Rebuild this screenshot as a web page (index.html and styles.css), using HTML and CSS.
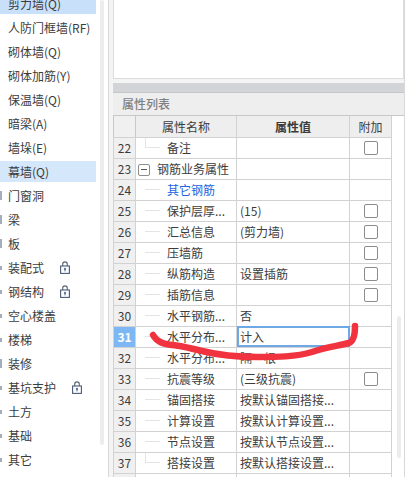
FILE: index.html
```html
<!DOCTYPE html>
<html lang="zh">
<head>
<meta charset="utf-8">
<title>属性列表</title>
<link rel="stylesheet" href="styles.css">
</head>
<body>
<svg width="0" height="0" class="defs"><defs>
<symbol id="lock" viewBox="0 0 10 13"><path d="M2.7 5V3.2a2.3 2.3 0 0 1 4.6 0V5" fill="none" stroke="#5a6478" stroke-width="1.1"/><rect x=".6" y="5" width="8.8" height="7.4" fill="#fff" stroke="#4a5a78" stroke-width="1.1"/><circle cx="5" cy="8" r="1.2" fill="#5a7a98"/><path d="M5 8.5v2" stroke="#5a7a98"/></symbol>
</defs></svg>
<aside class="side">
  <ul class="list">
    <li class="item sel-dark">剪力墙(Q)</li>
    <li class="item">人防门框墙(RF)</li>
    <li class="item">砌体墙(Q)</li>
    <li class="item">砌体加筋(Y)</li>
    <li class="item">保温墙(Q)</li>
    <li class="item">暗梁(A)</li>
    <li class="item">墙垛(E)</li>
    <li class="item sel">幕墙(Q)</li>
    <li class="item"><i class="tick tall"></i>门窗洞</li>
    <li class="item"><i class="tick tall"></i>梁</li>
    <li class="item"><i class="tick tall"></i>板</li>
    <li class="item"><i class="tick"></i>装配式<svg class="lock"><use href="#lock"/></svg></li>
    <li class="item"><i class="tick"></i>钢结构<svg class="lock"><use href="#lock"/></svg></li>
    <li class="item"><i class="tick"></i>空心楼盖</li>
    <li class="item"><i class="tick"></i>楼梯</li>
    <li class="item"><i class="tick tall"></i>装修</li>
    <li class="item"><i class="tick"></i>基坑支护<svg class="lock"><use href="#lock"/></svg></li>
    <li class="item"><i class="tick"></i>土方</li>
    <li class="item"><i class="tick"></i>基础</li>
    <li class="item"><i class="tick"></i>其它</li>
  </ul>
  <div class="side-scroll"></div>
</aside>
<main class="main">
  <div class="top-box"></div>
  <div class="bar"></div>
  <div class="title">属性列表</div>
  <div class="grid-wrap">
    <table class="grid">
      <colgroup><col class="c-num"><col class="c-name"><col class="c-val"><col class="c-add"></colgroup>
      <thead>
        <tr><th class="num"></th><th class="h-name">属性名称</th><th class="h-val">属性值</th><th class="h-add">附加</th></tr>
      </thead>
      <tbody>
        <tr><td class="num">22</td><td class="name tree end">备注</td><td></td><td class="add"><i class="check"></i></td></tr>
        <tr><td class="num">23</td><td class="group"><i class="minus"></i>钢筋业务属性</td><td></td><td></td></tr>
        <tr><td class="num">24</td><td class="name tree link">其它钢筋</td><td></td><td></td></tr>
        <tr><td class="num">25</td><td class="name tree">保护层厚...</td><td class="val">(15)</td><td class="add"><i class="check"></i></td></tr>
        <tr><td class="num">26</td><td class="name tree">汇总信息</td><td class="val">(剪力墙)</td><td class="add"><i class="check"></i></td></tr>
        <tr><td class="num">27</td><td class="name tree">压墙筋</td><td></td><td class="add"><i class="check"></i></td></tr>
        <tr><td class="num">28</td><td class="name tree">纵筋构造</td><td class="val">设置插筋</td><td class="add"><i class="check"></i></td></tr>
        <tr><td class="num">29</td><td class="name tree">插筋信息</td><td></td><td class="add"><i class="check"></i></td></tr>
        <tr><td class="num">30</td><td class="name tree">水平钢筋...</td><td class="val">否</td><td></td></tr>
        <tr><td class="num active">31</td><td class="name tree">水平分布...</td><td class="val editing">计入</td><td></td></tr>
        <tr><td class="num">32</td><td class="name tree">水平分布...</td><td class="val">隔一根</td><td></td></tr>
        <tr><td class="num">33</td><td class="name tree">抗震等级</td><td class="val">(三级抗震)</td><td class="add"><i class="check"></i></td></tr>
        <tr><td class="num">34</td><td class="name tree">锚固搭接</td><td class="val">按默认锚固搭接...</td><td></td></tr>
        <tr><td class="num">35</td><td class="name tree">计算设置</td><td class="val">按默认计算设置...</td><td></td></tr>
        <tr><td class="num">36</td><td class="name tree">节点设置</td><td class="val">按默认节点设置...</td><td></td></tr>
        <tr><td class="num">37</td><td class="name tree end">搭接设置</td><td class="val">按默认搭接设置...</td><td></td></tr>
        <tr><td class="num"></td><td class="group"><i class="minus"></i></td><td></td><td></td></tr>
      </tbody>
    </table>
    <div class="grid-scroll"></div>
  </div>
</main>
<svg class="scribble" viewBox="0 0 406 477" aria-hidden="true"><path d="M153 335C157 342 163 344 172 345C184 346 192 349 202 351C218 355 236 357 258 357C276 357 296 357 312 352C326 347 338 346 349 343C354 341 355 334 355 326" /></svg>
</body>
</html>
```
FILE: styles.css
```css
* { box-sizing: border-box; }
html, body { margin: 0; height: 100%; }
body {
  display: flex;
  width: 406px;
  height: 477px;
  overflow: hidden;
  background: #fff;
  color: #3c3c3c;
  font: 12px/21px "Noto Sans CJK SC", "Noto Sans", sans-serif;
}
.defs { position: absolute; }

.side { flex: 0 0 108px; display: flex; height: 477px; }
.list { list-style: none; width: 96px; margin: -7px 0 0; padding: 0; }
.item {
  display: flex;
  align-items: center;
  height: 21px;
  margin-bottom: 3px;
  padding-left: 8px;
  white-space: nowrap;
}
.sel-dark { background: #c9e0fa; }
.sel { background: #d5e7fb; }
.tick { width: 2px; height: 4px; margin: 0 6px 0 -8px; background: #a4adb9; }
.tall { height: 9px; }
.lock { width: 10px; height: 13px; margin-left: 16px; flex: none; }
.side-scroll { width: 4px; height: 445px; margin-left: 4px; border-radius: 2px; background: #ececec; }

.main {
  flex: 0 0 297px;
  display: flex;
  flex-direction: column;
  height: 477px;
  padding-left: 4px;
  background: #f4f4f4;
  border-left: 1px solid #d8d8d8;
  border-right: 1px solid #d8d8d8;
  overflow: hidden;
}
.top-box { flex: none; height: 79px; background: #fff; border: 1px solid #dcdcdc; border-top: 0; }
.bar { flex: none; height: 10px; margin-top: 4px; background: #d2d4d8; border-bottom: 1px solid #c4c6ca; }
.title { flex: none; height: 22px; padding-left: 9px; line-height: 22px; background: #eeeeee; color: #808080; font-weight: 500; font-size: 12px; }
.grid-wrap { flex: 1; display: flex; align-items: flex-start; background: #fff; border-top: 1px solid #c8c8c8; min-height: 0; }
.grid { flex: none; width: 278px; table-layout: fixed; border-collapse: collapse; }
.c-num { width: 22px; }
.c-name { width: 101px; }
.c-val { width: 113px; }
.c-add { width: 42px; }
tr { height: 21px; }
th, td { padding: 0; border: 1px solid #d2d2d2; white-space: nowrap; overflow: hidden; font-weight: 400; height: 21px; line-height: 19px; }
thead tr:first-child th { border-top: 0; }
th { background: #eeeeee; text-align: center; }
.h-val { font-weight: 700; }
.num { background: #f0f0f0; text-align: center; }
th.num { border-left-color: #c8c8c8; border-right-color: #c8c8c8; }
.active { background: #7db8f5; color: #fff; font-weight: 700; }
.name { position: relative; padding-left: 31px; }
.group { padding-left: 2px; }
.link { color: #2463e0; }
.val { padding-left: 3px; }
.editing { outline: 2px solid #6ea9e6; outline-offset: -2px; }
.add { text-align: center; }
.tree::before { content: ""; position: absolute; left: 9px; top: 9px; width: 15px; height: 1px; background: #e4e4e4; }
.end::after { content: ""; position: absolute; left: 9px; top: 0; width: 1px; height: 10px; background: #e4e4e4; }
.check { display: block; width: 14px; height: 14px; margin: 0 auto; border: 1px solid #8c8c8c; border-radius: 2px; background: #fff; }
.minus { position: relative; display: inline-block; width: 12px; height: 12px; margin-right: 7px; vertical-align: -2px; border: 1px solid #8c8c8c; border-radius: 2px; }
.minus::after { content: ""; position: absolute; left: 2px; top: 4px; width: 6px; height: 1px; background: #555; }
.grid-scroll { flex: none; width: 4px; height: 142px; margin: 200px 0 0 5px; border-radius: 2px; background: #ececec; }

.scribble { position: absolute; left: 0; top: 0; width: 406px; height: 477px; pointer-events: none; }
.scribble path { fill: none; stroke: #f0333f; stroke-width: 6.5; stroke-linecap: round; stroke-linejoin: round; }
```
